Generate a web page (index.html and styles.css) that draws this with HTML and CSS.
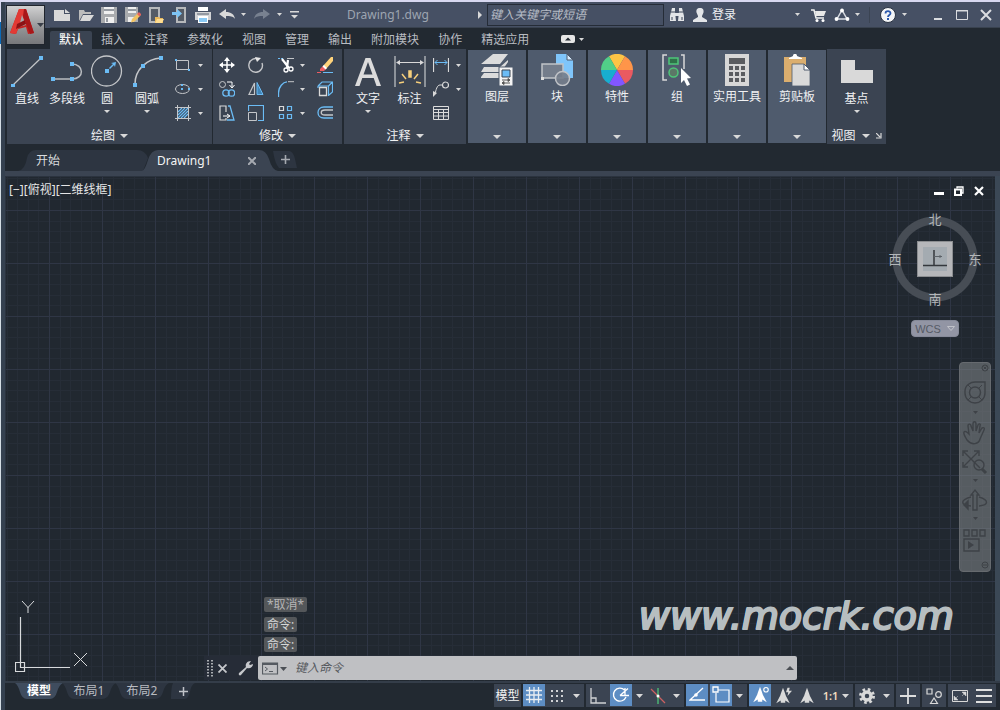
FILE: index.html
```html
<!DOCTYPE html>
<html lang="zh-CN">
<head>
<meta charset="utf-8">
<title>Drawing1.dwg</title>
<link rel="stylesheet" href="styles.css">
</head>
<body>
<svg class="defs" aria-hidden="true">
  <symbol id="caret" viewBox="0 0 6 4" preserveAspectRatio="none"><path d="M0 0h6L3 4z" fill="#d9d9d9"/></symbol>
  <symbol id="person" viewBox="0 0 24 24"><path d="M12 1l2.600 7 1.200 3.500L21 21.500l-6-3.500v3H9v-3l-6 3.500L8.200 11.500 9.400 8z" fill="currentColor"/></symbol>
</svg>
<div class="window">
  <header class="header">
    <div class="logo-cell">
      <button class="logo" aria-label="应用程序菜单">
        <svg width="38" height="38" viewBox="0 0 38 38">
          <path d="M3 27L12 3h7l8 24-6 1-2-7-8 2-2 5z" fill="#c4201f"/>
          <path d="M12 3h7l-8 20-2 5-6-1z" fill="#e23a35"/>
          <path d="M15 9l4 10-7 2z" fill="#a9a9aa"/>
          <path d="M10 18l8-4 1 4-10 5z" fill="#8d1114"/>
          <path d="M17 3h2l8 24-4 1-7-18z" fill="#a81719"/>
          <path d="M30 17h7l-3.500 4z" fill="#3a3f48"/>
        </svg>
      </button>
    </div>
    <div class="titlebar">
      <div class="quick">
        <button aria-label="新建"><svg width="16" height="16" viewBox="0 0 16 16"><path d="M0 3h10v4h6v7H0z" fill="#d9d9d9"/><path d="M11 2l5 4h-5z" fill="#d9d9d9"/></svg></button>
        <button aria-label="打开"><svg width="16" height="16" viewBox="0 0 16 16"><path d="M1 14V3h5l1 2h6v2H5z" fill="#bcbcbc"/><path d="M5 8h11l-4 6H2z" fill="#d9d9d9"/></svg></button>
        <button aria-label="保存"><svg width="16" height="16" viewBox="0 0 16 16"><path d="M0 0h16v16H0z" fill="#a9abae"/><path d="M3 0h10v7H3zM4 10h9v6H4z" fill="#f0f0f0"/><path d="M3 3h10M6 11v4" stroke="#3d4655"/></svg></button>
        <button aria-label="另存为"><svg width="16" height="16" viewBox="0 0 16 16"><path d="M0 0h13v15H0z" fill="#a9abae"/><path d="M3 0h8v6H3zM3 10h6v5H3z" fill="#eee"/><path d="M3 3h8" stroke="#3d4655"/><path d="M7 12l6-6 2.500 2.500-6 6L6 15.500z" fill="#f2c260"/><path d="M12 7l2-2 2.500 2.500-2 2z" fill="#e6605c"/></svg></button>
        <button aria-label="从移动设备打开"><svg width="16" height="16" viewBox="0 0 16 16"><path d="M2 1h9v14H2z" fill="#545b66" stroke="#b6b8bb" stroke-width="2"/><path d="M7 10h4l1 1h3v5H7z" fill="#e9b85a"/><path d="M9 12h7l-2 4H7z" fill="#ffdd91"/></svg></button>
        <button aria-label="保存到移动设备"><svg width="16" height="16" viewBox="0 0 16 16"><path d="M5 1h8v14H5z" fill="#545b66" stroke="#b6b8bb" stroke-width="2"/><path d="M0 5h5V2l5 4.500L5 11V8H0z" fill="#7cc3f5"/></svg></button>
        <button aria-label="打印"><svg width="16" height="16" viewBox="0 0 16 16"><path d="M3 0h10v4H3z" fill="#fff"/><path d="M0 5h16v8H0z" fill="#d2d3d5"/><path d="M2 7h12" stroke="#566070"/><path d="M3 9h10v7H3z" fill="#fff"/><path d="M4 11h8v4H4z" fill="#8bcaf5"/></svg></button>
        <button aria-label="放弃"><svg width="16" height="16" viewBox="0 0 16 16"><path d="M0 7l7-5v3c5 0 8 2 9 7-2-3-5-3-9-3v3z" fill="#d9d9d9"/></svg></button>
      </div>
      <button class="c1" aria-label="放弃列表"><svg width="5" height="3"><use href="#caret"/></svg></button>
      <button class="redo" aria-label="重做"><svg width="16" height="16" viewBox="0 0 16 16"><path d="M16 7L9 2v3C4 5 1 7 0 12c2-3 5-3 9-3v3z" fill="#788190"/></svg></button>
      <button class="c2" aria-label="重做列表"><svg width="5" height="3"><use href="#caret"/></svg></button>
      <button class="c3" aria-label="自定义快速访问工具栏"><svg width="9" height="8" viewBox="0 0 9 8"><path d="M0 0h9v1.500H0zM1 4h7L4.500 7.500z" fill="#d9d9d9"/></svg></button>
      <span class="doc-name">Drawing1.dwg</span>
      <div class="info">
        <svg width="4" height="8" viewBox="0 0 4 8"><path d="M0 0l4 4-4 4z" fill="#d9d9d9"/></svg>
        <input class="search" type="text" placeholder="键入关键字或短语" aria-label="搜索">
        <button aria-label="查找"><svg width="16" height="16" viewBox="0 0 16 16"><path d="M3 1h3v4l1 9H1V9zM10 1h3l2 8v5H9l1-9zM6 6h4v3H6z" fill="#e3e5e8"/><path d="M3 10v3M13 10v3M2 5h4M10 5h4" stroke="#3c4658"/></svg></button>
        <button class="login"><svg width="14" height="16" viewBox="0 0 14 16"><path d="M7 1c3 0 4 2 3.500 4.500L9 9v1l5 3v2H0v-2l5-3V9L3.500 5.500C3 3 4 1 7 1z" fill="#e3e5e8"/></svg><span>登录</span></button>
      </div>
      <div class="right-tools">
        <button aria-label="登录选项"><svg width="5" height="3"><use href="#caret"/></svg></button>
        <button class="cart" aria-label="购物车"><svg width="16" height="16" viewBox="0 0 16 16"><path d="M0 3h3l2 8h8" fill="none" stroke="#f0f0f0" stroke-width="1.500"/><path d="M4 4h11l-2 5H5z" fill="#e8e8e8"/><circle cx="6" cy="13.500" r="1.500" fill="#fff"/><circle cx="12" cy="13.500" r="1.500" fill="#fff"/></svg></button>
        <button class="a360" aria-label="保持连接"><svg width="16" height="16" viewBox="0 0 16 16"><path d="M8 3L3 12h10z" fill="none" stroke="#d8dbe2" stroke-width="1.500"/><g fill="#fff"><circle cx="8" cy="3.500" r="1.900"/><circle cx="2.500" cy="12" r="1.900"/><circle cx="13.500" cy="12" r="1.900"/></g></svg><svg width="5" height="3"><use href="#caret"/></svg></button>
        <button class="help" aria-label="帮助"><svg width="16" height="16" viewBox="0 0 16 16"><circle cx="8" cy="8" r="7.500" fill="#f4f5f7" stroke="#2b3343"/><path d="M5.500 6.500C5.500 3.500 10.500 3.500 10.500 6.300 10.500 8 8 8 8 10" fill="none" stroke="#2b58ad" stroke-width="1.800"/><path d="M7 11h2v2H7z" fill="#2b58ad"/></svg><svg width="5" height="3"><use href="#caret"/></svg></button>
        <div class="win-buttons">
          <button aria-label="最小化"><svg width="12" height="12" viewBox="0 0 12 12"><path d="M2 9h8v2H2z" fill="#dadce0"/></svg></button>
          <button aria-label="最大化"><svg width="12" height="12" viewBox="0 0 12 12"><path d="M.5 1.500h11v9H.5z" fill="none" stroke="#dadce0"/><path d="M0 1h12v1.500H0z" fill="#dadce0"/></svg></button>
          <button aria-label="关闭"><svg width="12" height="12" viewBox="0 0 12 12"><path d="M1 1l10 10M11 1L1 11" stroke="#dadce0" stroke-width="2"/></svg></button>
        </div>
      </div>
    </div>
    <nav class="tabs">
      <button class="tab active">默认</button><button class="tab">插入</button><button class="tab">注释</button><button class="tab">参数化</button><button class="tab">视图</button><button class="tab">管理</button><button class="tab">输出</button><button class="tab">附加模块</button><button class="tab">协作</button><button class="tab">精选应用</button>
      <button class="toggle" aria-label="最小化功能区"><svg width="14" height="8" viewBox="0 0 14 8"><rect width="14" height="8" rx="2" fill="#e6e6e6"/><path d="M4 5.500h6L7 2.500z" fill="#222931"/></svg><svg width="5" height="3"><use href="#caret"/></svg></button>
    </nav>
  </header>

  <section class="ribbon">
    <div class="panel draw">
      <div class="panel-body">
        <button class="big"><svg width="32" height="32" viewBox="0 0 32 32"><path d="M2 30L30 3" stroke="#c4c6c9" stroke-width="1.200"/><path d="M0 29h4v3H0zM28 1h4v4h-4z" fill="#6bbcf5"/></svg><span>直线</span></button>
        <button class="big"><svg width="32" height="32" viewBox="0 0 32 32"><path d="M1 24h20c13 0 12-15 0-15" fill="none" stroke="#b9bcc0" stroke-width="1.500"/><path d="M0 22h4v4H0zM19 22h4v4h-4zM19 7h4v4h-4z" fill="#6bbcf5"/></svg><span>多段线</span></button>
        <button class="big"><svg width="32" height="32" viewBox="0 0 32 32"><circle cx="15.500" cy="16" r="15" fill="none" stroke="#c4c6c9" stroke-width="1.300"/><path d="M14 14h4v4h-4zM18 13l4-4-2-1 5-1-1 5-1-2-4 4z" fill="#6bbcf5"/></svg><span>圆</span><svg width="6" height="3"><use href="#caret"/></svg></button>
        <button class="big"><svg width="32" height="32" viewBox="0 0 32 32"><path d="M4 29C4 15 15 4 30 3" fill="none" stroke="#c4c6c9" stroke-width="1.500"/><path d="M2 28h4v4H2zM10 9h4v4h-4zM28 1h4v4h-4z" fill="#6bbcf5"/></svg><span>圆弧</span><svg width="6" height="3"><use href="#caret"/></svg></button>
        <div class="small-col">
          <button class="small" aria-label="矩形"><svg width="16" height="16" viewBox="0 0 16 16"><path d="M1.500 3.500h12v9h-12z" fill="none" stroke="#c4c6c9"/><path d="M0 2h2v2H0zM13 12h2v2h-2z" fill="#6bbcf5"/></svg><svg width="5" height="3"><use href="#caret"/></svg></button>
          <button class="small" aria-label="椭圆"><svg width="16" height="16" viewBox="0 0 16 16"><ellipse cx="7.500" cy="8" rx="7" ry="4.500" fill="none" stroke="#c4c6c9"/><path d="M6 7h2v2H6zM6 3h2v2H6zM13 7h2v2h-2z" fill="#6bbcf5"/></svg><svg width="5" height="3"><use href="#caret"/></svg></button>
          <button class="small" aria-label="图案填充"><svg width="16" height="16" viewBox="0 0 16 16"><path d="M3 7l4-4M3 10l7-7M3 13L13 3M6 13l7-7M9 13l4-4" stroke="#6bbcf5" stroke-width="1.200"/><path d="M2.500 0v16M13.500 0v16M0 2.500h16M0 13.500h16" stroke="#c4c6c9"/></svg><svg width="5" height="3"><use href="#caret"/></svg></button>
        </div>
      </div>
      <button class="panel-title">绘图<svg width="8" height="4"><use href="#caret"/></svg></button>
    </div>

    <div class="panel modify">
      <div class="tool-grid">
        <button aria-label="移动"><svg width="16" height="16" viewBox="0 0 16 16"><path d="M8 1v14M1 8h14" stroke="#fff" stroke-width="1.500"/><path d="M5 4l3-4 3 4zM5 12l3 4 3-4zM4 5L0 8l4 3zM12 5l4 3-4 3z" fill="#fff"/></svg></button>
        <button aria-label="旋转"><svg width="16" height="16" viewBox="0 0 16 16"><path d="M11 2.500A6.800 6.800 0 1 0 14 6" fill="none" stroke="#c4c6c9" stroke-width="1.400"/><path d="M7 0l6 1-4 4z" fill="#e6e6e6"/></svg></button>
        <button class="drop" aria-label="修剪"><svg width="16" height="16" viewBox="0 0 16 16"><path d="M0 1.500h6" stroke="#6bbcf5" stroke-dasharray="2 1"/><path d="M9 1.500h7" stroke="#c4c6c9"/><path d="M4 2l7 9M10 3L9 11" stroke="#fff" stroke-width="2.200"/><circle cx="8" cy="13" r="2" fill="none" stroke="#fff" stroke-width="1.300"/><circle cx="13" cy="12" r="2" fill="none" stroke="#fff" stroke-width="1.300"/></svg><svg width="5" height="3"><use href="#caret"/></svg></button>
        <button aria-label="删除"><svg width="16" height="16" viewBox="0 0 16 16"><path d="M6 9L14 0h2v4l-7 8z" fill="#ffd37a"/><path d="M6 9l3 3-2 2H3v-2z" fill="#ed5c63"/><path d="M5.500 9.500L7 8l3 3-1.500 1.500z" fill="#fff"/><path d="M0 15.500h4" stroke="#ed5c63"/><path d="M6 15.500h10" stroke="#6bbcf5"/></svg></button>

        <button aria-label="复制"><svg width="16" height="16" viewBox="0 0 16 16"><circle cx="3.500" cy="3.500" r="3" fill="none" stroke="#c4c6c9"/><path d="M8 1h5v5M10.500 4L13 7l2.500-3" fill="none" stroke="#fff"/><circle cx="7" cy="12" r="3.200" fill="none" stroke="#6bbcf5" stroke-width="1.300"/><circle cx="12.500" cy="12" r="3.200" fill="none" stroke="#6bbcf5" stroke-width="1.300"/></svg></button>
        <button aria-label="镜像"><svg width="16" height="16" viewBox="0 0 16 16"><path d="M6.500 2v11.500H1z" fill="none" stroke="#c4c6c9" stroke-width="1.200"/><path d="M9 1.500v12h6z" fill="#4286b8" stroke="#6bbcf5"/></svg></button>
        <button class="drop" aria-label="圆角"><svg width="16" height="16" viewBox="0 0 16 16"><path d="M.5 16v-4C.5 6 5 1 9 .8" fill="none" stroke="#6bbcf5" stroke-width="1.300"/><path d="M10 .7h6" stroke="#c4c6c9"/></svg><svg width="5" height="3"><use href="#caret"/></svg></button>
        <button aria-label="分解"><svg width="16" height="16" viewBox="0 0 16 16"><path d="M1 5l4-4h10.500v10L12 14M1 5h10.500v10M11.500 5l4-4M1 5v2" fill="none" stroke="#6bbcf5" stroke-width="1.200"/><path d="M2.500 6.500h7v8h-7z" fill="none" stroke="#d9d9d9" stroke-width="1.300"/></svg></button>

        <button aria-label="拉伸"><svg width="16" height="16" viewBox="0 0 16 16"><path d="M7 7V1H1v14h6v-2" fill="none" stroke="#d9d9d9" stroke-width="1.200"/><path d="M9 1h2l4 14H8" fill="none" stroke="#6bbcf5" stroke-width="1.300"/><path d="M4 11h6M8 9l3 2-3 2" stroke="#fff" fill="none"/></svg></button>
        <button aria-label="缩放"><svg width="16" height="16" viewBox="0 0 16 16"><path d="M.5 6V.5h15v15H10" fill="none" stroke="#6bbcf5" stroke-width="1.200"/><path d="M.5 7.500h8v8h-8z" fill="none" stroke="#c4c6c9"/></svg></button>
        <button class="drop" aria-label="阵列"><svg width="16" height="16" viewBox="0 0 16 16"><path d="M1.500 1.500h4v4h-4z" fill="none" stroke="#d9d9d9" stroke-width="1.200"/><path d="M9.500 1.500h4v4h-4zM1.500 9.500h4v4h-4zM9.500 9.500h4v4h-4z" fill="none" stroke="#6bbcf5" stroke-width="1.200"/></svg><svg width="5" height="3"><use href="#caret"/></svg></button>
        <button aria-label="偏移"><svg width="16" height="16" viewBox="0 0 16 16"><path d="M16 2H7C-1 2-1 13 7 13h9" fill="none" stroke="#6bbcf5" stroke-width="1.300"/><path d="M16 5H8C3 5 3 10 8 10h8" fill="none" stroke="#c4c6c9" stroke-width="1.300"/></svg></button>
      </div>
      <button class="panel-title">修改<svg width="8" height="4"><use href="#caret"/></svg></button>
    </div>

    <div class="panel annotate">
      <div class="panel-body">
        <button class="big"><svg width="32" height="32" viewBox="0 0 32 32"><path d="M3 31L13.500 3h5L29 31h-4.500l-2.800-8H10.300l-2.800 8zM11.500 19.500h9L16 7z" fill="#dcdcdc" fill-rule="evenodd"/></svg><span>文字</span><svg width="6" height="3"><use href="#caret"/></svg></button>
        <button class="big"><svg width="32" height="32" viewBox="0 0 32 32"><path d="M1 1v31M31 1v31" stroke="#a9adb3" stroke-width="1.500"/><path d="M3 7.500h26" stroke="#d9d9d9"/><path d="M2 7.500L6 5v5zM30 7.500L26 5v5z" fill="#d9d9d9"/><path d="M15 16h2v6h-2zM8 19l4 5M24 19l-4 5M5 28l5-1M22 27l5 1" stroke="#f6cf7c" stroke-width="1.500" fill="#f6cf7c"/></svg><span>标注</span></button>
        <div class="small-col">
          <button class="small" aria-label="线性"><svg width="16" height="16" viewBox="0 0 16 16"><path d="M.5 1v14M15.500 1v14" stroke="#d9d9d9" stroke-width="1.200"/><path d="M2 5.500h12M4.500 3L2 5.500 4.500 8M11.500 3L14 5.500 11.500 8" stroke="#6bbcf5" fill="none"/></svg><svg width="5" height="3"><use href="#caret"/></svg></button>
          <button class="small" aria-label="引线"><svg width="16" height="16" viewBox="0 0 16 16"><circle cx="12.500" cy="4" r="3" fill="none" stroke="#d9d9d9" stroke-width="1.200"/><path d="M9 4H7C4 4 3 9 2 13" fill="none" stroke="#d9d9d9"/><path d="M0 10l4 2-4 4z" fill="#d9d9d9"/></svg><svg width="5" height="3"><use href="#caret"/></svg></button>
          <button class="small" aria-label="表格"><svg width="16" height="16" viewBox="0 0 16 16"><path d="M.5 1.500h15v13H.5zM.5 4.500h15M.5 7.500h15M.5 11h15M5.500 5v9M10.500 5v9" fill="none" stroke="#dcdcdc"/></svg></button>
        </div>
      </div>
      <button class="panel-title">注释<svg width="8" height="4"><use href="#caret"/></svg></button>
    </div>

    <button class="folded"><svg width="32" height="32" viewBox="0 0 32 32"><path d="M12 0h15l-8 10H0zM3 13h16l8-7v2l-7 10H0zM3 19h15v5H0v-1z" fill="#dcdcdc"/><path d="M0 11.500h19l8-7M0 18.500h19" stroke="#4f5b6d" fill="none"/><path d="M18 13h14v19H18z" fill="#f4f4f4" stroke="#4f5b6d"/><path d="M21 16h8v7h-8z" fill="#6bbcf5" stroke="#3b4452"/><path d="M21 26h7M22 29h7M21 29l2-1.500v3zM29 26l-2-1.500v3z" stroke="#555" fill="#555"/></svg><span>图层</span><svg width="8" height="4"><use href="#caret"/></svg></button>
    <button class="folded"><svg width="32" height="32" viewBox="0 0 32 32"><path d="M15 0h11l6 6v18H15z" fill="#7fc5fa"/><path d="M26 0l6 6h-6z" fill="#d7edff" stroke="#4f5b6d"/><path d="M1 10h21v14H1z" fill="#747d8b" stroke="#c0c3c7" stroke-width="1.500"/><circle cx="21.500" cy="24.500" r="7" fill="#747d8b" fill-opacity=".9" stroke="#c0c3c7" stroke-width="1.500"/><path d="M0 23h3v3H0z" fill="#ddd"/></svg><span>块</span><svg width="8" height="4"><use href="#caret"/></svg></button>
    <button class="folded"><svg width="32" height="32" viewBox="0 0 32 32"><path d="M16 16L8 2.140A16 16 0 0 1 24 2.140z" fill="#fec445"/><path d="M16 16L24 2.140A16 16 0 0 1 32 16z" fill="#ff9549"/><path d="M16 16H32A16 16 0 0 1 24 29.860z" fill="#ea5a61"/><path d="M16 16L24 29.860A16 16 0 0 1 8 29.860z" fill="#8256ff"/><path d="M16 16L8 29.860A16 16 0 0 1 0 16z" fill="#18aed0"/><path d="M16 16H0A16 16 0 0 1 8 2.140z" fill="#51cf88"/></svg><span>特性</span><svg width="8" height="4"><use href="#caret"/></svg></button>
    <button class="folded"><svg width="32" height="32" viewBox="0 0 32 32"><path d="M6 1H2v25h4M20 1h3v14" fill="none" stroke="#d9d9d9" stroke-width="1.500"/><path d="M8 4h9v6H8z" fill="#2f7149" stroke="#4fc579" stroke-width="1.500"/><circle cx="12.500" cy="18.500" r="4.500" fill="#5c7767" stroke="#4fc579" stroke-width="1.500"/><path d="M20 14l10 10-4 .500 3 6-3 1.500-3-6-3 3z" fill="#fff"/></svg><span>组</span><svg width="8" height="4"><use href="#caret"/></svg></button>
    <button class="folded"><svg width="32" height="32" viewBox="0 0 32 32"><path d="M4 0h24v32H4z" fill="#d7d7d7"/><path d="M8 4h16v6H8zM8 12h4v4H8zM14 12h4v4h-4zM20 12h4v4h-4zM8 18h4v4H8zM14 18h4v4h-4zM20 18h4v4h-4zM8 24h4v4H8zM14 24h4v4h-4zM20 24h4v4h-4z" fill="#5a5c60"/></svg><span>实用工具</span><svg width="8" height="4"><use href="#caret"/></svg></button>
    <button class="folded"><svg width="32" height="32" viewBox="0 0 32 32"><path d="M3 3h22v25H3z" fill="#dbae6e"/><path d="M8 4l4-2c0-3 4-3 4 0l5 2v1H8z" fill="#fff"/><path d="M11 10h12l6 6v16H11z" fill="#d9d9d9" stroke="#4f5b6d" stroke-width=".8"/><path d="M23 10l6 6h-6z" fill="#fff" stroke="#4f5b6d"/></svg><span>剪贴板</span><svg width="8" height="4"><use href="#caret"/></svg></button>

    <div class="panel view">
      <div class="panel-body">
        <button class="big"><svg width="32" height="32" viewBox="0 0 32 32"><path d="M0 5h14v10h18v13H0z" fill="#d9d9d9"/></svg><span>基点</span><svg width="6" height="3"><use href="#caret"/></svg></button>
      </div>
      <button class="panel-title">视图<svg width="8" height="4"><use href="#caret"/></svg><svg width="6" height="6" viewBox="0 0 6 6"><path d="M0 0l4 4M5 0v5H0" fill="none" stroke="#d9d9d9" stroke-width="1.200"/></svg></button>
    </div>
  </section>

  <nav class="file-tabs">
    <button class="file-tab start">开始</button>
    <div class="file-tab current"><span>Drawing1</span><button aria-label="关闭图形"><svg width="8" height="8" viewBox="0 0 8 8"><path d="M0 0l8 8M8 0L0 8" stroke="#a5a9b0" stroke-width="2"/></svg></button></div>
    <button class="file-tab add" aria-label="新图形"><svg width="9" height="9" viewBox="0 0 9 9"><path d="M4.500 0v9M0 4.500h9" stroke="#a5a9b0" stroke-width="1.600"/></svg></button>
  </nav>

  <main class="canvas">
    <div class="view-label">[−][俯视][二维线框]</div>
    <div class="view-buttons">
      <button aria-label="最小化视口"><svg width="10" height="10" viewBox="0 0 10 10"><path d="M0 6h10v3H0z" fill="#fff"/></svg></button>
      <button aria-label="还原视口"><svg width="10" height="10" viewBox="0 0 10 10"><path d="M3 2.500V1h6v6H7.500" fill="none" stroke="#fff" stroke-width="1.300"/><path d="M1 3.500h6V9H1z" fill="none" stroke="#fff" stroke-width="2"/></svg></button>
      <button aria-label="关闭视口"><svg width="10" height="10" viewBox="0 0 10 10"><path d="M1 1l8 8M9 1L1 9" stroke="#fff" stroke-width="2.200"/></svg></button>
    </div>
    <div class="cube">
      <button class="north">北</button><button class="west">西</button><button class="top" aria-label="上"><svg width="34" height="34" viewBox="1 1 34 34"><path d="M6 6h24v24H6z" fill="#a4abb1"/><path d="M17 9v16M6 24.500h24" stroke="#34383d" stroke-width="1.500" fill="none"/><path d="M17 15.500h8M23 14v3" stroke="#5c6268"/></svg></button><button class="east">东</button><button class="south">南</button>
    </div>
    <button class="wcs">WCS<svg width="8" height="5" viewBox="0 0 8 5"><path d="M.5.500h7L4 4.500z" fill="none" stroke="#c0c2c9"/></svg></button>
    <div class="navbar">
      <svg width="30" height="208" viewBox="1 0 30 208" fill="none" stroke="#3e4247" stroke-width="1.400">
        <circle cx="26" cy="5" r="3" stroke-width="1"/><path d="M24.500 3.500l3 3M27.500 3.500l-3 3" stroke-width="1"/>
        <path d="M6 30V28C6 22 12 19 16 19h10v11c0 6-5 10-10 10S6 36 6 30z"/><circle cx="16" cy="29.500" r="5.500"/><path d="M9 22l3 3M23 22l-3 3M9 37l3-3M23 37l-3-3" stroke-width="1"/>
        <path d="M14 48h5l-2.500 3z" fill="#3e4247" stroke="none"/>
        <path d="M8 77c-2-4-4-6-3-8s4 1 5 2l-1-8c0-3 3-2 3 0l2 5v-7c0-3 3-3 3 0v7l2-6c1-2 3-1 2 1l-1 7 3-5c2-1 3 0 2 2l-4 9c-1 5-8 7-13 1z"/>
        <path d="M5 89l16 16M5 103l14-14M4 93v-5h5M15 88h5v5M4 99v5h5"/><circle cx="20" cy="102" r="5"/><path d="M23 106l4 4" stroke-width="3"/>
        <path d="M14 116h5l-2.500 3z" fill="#3e4247" stroke="none"/>
        <path d="M14 147v-15h-2l4-5 4 5h-2v15z"/><path d="M12 134c-11 3-11 8 0 9M20 134c10 3 10 8 0 9"/><path d="M9 138v8l-4-4z" fill="#3e4247"/>
        <path d="M14 154h5l-2.500 3z" fill="#3e4247" stroke="none"/>
        <path d="M5 167h5v6H5zM13 167h5v6h-5zM21 167h5v6h-5zM5 176h15v12H5z"/><path d="M9 178l6 4-6 4z" fill="#3e4247" stroke="none"/>
        <circle cx="26" cy="202" r="3" stroke-width="1"/><path d="M24 202h4" stroke-width="1"/>
      </svg>
    </div>
    <svg class="ucs" width="76" height="76" viewBox="0 0 76 76" fill="none" stroke="#d8dadc">
      <path d="M5.500 20v50.500H55M.5 65.500h9v9h-9z" stroke-width="1.200"/><path d="M7 4l6 6.500L19 4M13 10v6M59 56l13 13M72 56L59 69"/>
    </svg>
    <div class="watermark">www.mocrk.com</div>
    <div class="command">
      <div class="history"><span>*取消*</span><span>命令:</span><span>命令:</span></div>
      <div class="command-line">
        <div class="handle"><svg width="6" height="17" viewBox="0 0 6 17"><path d="M1 0v17M5 0v17" stroke="#a8abb0" stroke-width="2" stroke-dasharray="1.500 1.500"/></svg>
          <button aria-label="关闭命令行"><svg width="9" height="9" viewBox="0 0 9 9"><path d="M.5.500l8 8M8.500.500l-8 8" stroke="#c5c7cb" stroke-width="1.800"/></svg></button>
          <button aria-label="自定义"><svg width="15" height="15" viewBox="0 0 15 15"><path d="M1 12l7-6c-1-3 1-6 5-6l-2 3 1 1 3-1c0 3-3 5-6 4l-6 7c-1 1-3 0-2-2z" fill="#c5c7cb"/></svg></button></div>
        <label class="prompt"><svg width="25" height="13" viewBox="0 0 25 13"><path d="M.5 1h15v11H.5z" fill="none" stroke="#555a61" stroke-width="1.200"/><path d="M0 1h16v2H0z" fill="#555a61"/><path d="M3 5l2.500 2L3 9M7 9.500h4" fill="none" stroke="#555a61"/><path d="M18 5h7l-3.500 4z" fill="#4b4f55"/></svg><input type="text" placeholder="键入命令" aria-label="命令"><svg width="8" height="4" viewBox="0 0 8 4"><path d="M0 4h8L4 0z" fill="#4b4f55"/></svg></label>
      </div>
    </div>
  </main>

  <footer class="footer">
    <div class="layouts">
      <button class="layout active">模型</button><button class="layout">布局1</button><button class="layout">布局2</button><button class="layout plus" aria-label="新建布局"><svg width="9" height="9" viewBox="0 0 9 9"><path d="M4.500 0v9M0 4.500h9" stroke="#c0c3c8" stroke-width="1.500"/></svg></button>
    </div>
    <div class="status">
      <div class="group"><button class="text">模型</button></div>
      <div class="group"><button class="on" aria-label="栅格"><svg width="16" height="16" viewBox="0 0 16 16"><path d="M3.500 0v16M8 0v16M12.500 0v16M0 3.500h16M0 8h16M0 12.500h16" stroke="#e8edf2" stroke-width="1.300"/></svg></button><button aria-label="捕捉"><svg width="14" height="14" viewBox="0 0 14 14"><path d="M1 2h13M1 7h13M1 12h13" stroke="#cfd1d4" stroke-width="2" stroke-dasharray="2 3"/></svg></button><button class="drop-arrow" aria-label="捕捉选项"><svg width="7" height="4"><use href="#caret"/></svg></button></div>
      <div class="group"><button aria-label="正交"><svg width="16" height="16" viewBox="0 0 16 16"><path d="M1 0v15h15M1 10h5v5" fill="none" stroke="#cfd1d4" stroke-width="1.300"/></svg></button><button class="on" aria-label="极轴追踪"><svg width="18" height="18" viewBox="0 0 18 18"><path d="M12.500 4A6.500 6.500 0 1 0 14 11M8 9.500h9M8 9.500l8-7M13 2v8" fill="none" stroke="#fff" stroke-width="1.300"/></svg></button><button class="drop-arrow" aria-label="极轴选项"><svg width="7" height="4"><use href="#caret"/></svg></button><button aria-label="等轴测草图"><svg width="16" height="16" viewBox="0 0 16 16"><path d="M1 1l14 14" stroke="#cc6161" stroke-width="1.300"/><path d="M8 0v16" stroke="#4fc579" stroke-width="1.300"/><circle cx="8" cy="8" r="1.500" fill="#fff"/></svg></button><button class="drop-arrow" aria-label="等轴测选项"><svg width="7" height="4"><use href="#caret"/></svg></button></div>
      <div class="group"><button class="on" aria-label="对象捕捉追踪"><svg width="16" height="16" viewBox="0 0 16 16"><path d="M14 1L1 13h15" fill="none" stroke="#fff" stroke-width="1.300"/><circle cx="7" cy="8" r="1.800" fill="#fff"/></svg></button><button class="on" aria-label="对象捕捉"><svg width="18" height="18" viewBox="0 0 18 18"><path d="M6 4h11v12H4V7" fill="none" stroke="#fff" stroke-width="1.200"/><path d="M1 1h5v5H1z" fill="none" stroke="#fff" stroke-width="1.300"/></svg></button><button class="drop-arrow" aria-label="捕捉设置"><svg width="7" height="4"><use href="#caret"/></svg></button></div>
      <div class="group"><button class="on" aria-label="注释可见性"><svg width="18" height="18" viewBox="0 0 24 24"><use href="#person"/><circle cx="20" cy="5" r="3" fill="none" stroke="#fff" stroke-width="1.500"/></svg></button><button aria-label="自动缩放"><svg width="18" height="18" viewBox="0 0 24 24"><use href="#person"/><path d="M18 1l-2 6h3l-1 5 6-7h-4l1-4z" fill="#d9d9d9"/></svg></button><button aria-label="注释比例"><svg width="18" height="18" viewBox="0 0 24 24"><use href="#person"/></svg></button><button class="scale">1:1<svg width="7" height="4"><use href="#caret"/></svg></button></div>
      <div class="group"><button aria-label="切换工作空间"><svg width="16" height="16" viewBox="0 0 16 16"><circle cx="8" cy="8" r="6.500" fill="none" stroke="#d9d9d9" stroke-width="3" stroke-dasharray="2.550"/><circle cx="8" cy="8" r="4" fill="none" stroke="#d9d9d9" stroke-width="3.500"/></svg></button><button class="drop-arrow" aria-label="工作空间选项"><svg width="7" height="4"><use href="#caret"/></svg></button></div>
      <div class="group"><button aria-label="注释监视器"><svg width="16" height="16" viewBox="0 0 16 16"><path d="M8 0v16M0 8h16" stroke="#dedede" stroke-width="1.800"/></svg></button></div>
      <div class="group"><button aria-label="隔离对象"><svg width="16" height="16" viewBox="0 0 16 16"><path d="M1 1h5v5H1zM8 10l3.500 5.500h-7z" fill="none" stroke="#d9d9d9" stroke-width="1.200"/><circle cx="12.500" cy="6.500" r="2.800" fill="none" stroke="#d9d9d9" stroke-width="1.200"/></svg></button></div>
      <div class="group"><button aria-label="全屏显示"><svg width="16" height="12" viewBox="0 0 16 12"><path d="M.5.500h15v11H.5z" fill="none" stroke="#d9d9d9"/><path d="M10 2h4v4zM6 10H2V6zM3 9l3-3M10 6l3-3" fill="#d9d9d9" stroke="#d9d9d9" stroke-width=".5"/></svg></button><button aria-label="自定义"><svg width="16" height="14" viewBox="0 0 16 14"><path d="M0 1h16M0 7h16M0 13h16" stroke="#e0e0e0" stroke-width="1.800"/></svg></button></div>
    </div>
  </footer>
</div>
</body>
</html>
```
FILE: styles.css
```css
* { box-sizing: border-box; }
body {
  margin: 0;
  padding: 2px 0 0 1px;
  background: linear-gradient(#d8d8f0 22px, #0a6ab8 22px, #0a6ab8 44px, #d4dde4 44px);
  font: 12px/16px "Noto Sans", "Noto Sans CJK SC", sans-serif;
  color: #d9dbde;
}
button, input { font: inherit; color: inherit; }
button { margin: 0; padding: 0; border: 0; background: none; display: flex; align-items: center; justify-content: center; flex: none; }
svg { display: block; flex: none; }
.defs { position: absolute; width: 0; height: 0; }

.window {
  display: flex;
  flex-direction: column;
  min-height: calc(100vh - 2px);
  background: #222931;
  border-left: 4px solid #354150;
}

/* title bar and ribbon tabs */
.header { display: grid; grid-template: 26px 21px / 45px 1fr; }
.logo-cell { grid-row: 1 / 3; padding: 3px 0 0 1px; background: linear-gradient(#465064 26px, #222931 26px); }
.logo { width: 39px; height: 40px; border: 1px solid #20252d; background: linear-gradient(#d0d0d1, #929395 60%, #77787b); }
.titlebar { display: flex; align-items: center; background: #465064; border-bottom: 1px solid #39424f; }
.quick { display: flex; justify-content: space-between; width: 181px; margin-left: 4px; }
.c1 { margin-left: 6px; }
.redo { margin-left: 8px; }
.c2 { margin-left: 7px; }
.c3 { margin-left: 8px; }
.doc-name { margin-left: 48px; color: #9da5b1; font-size: 12px; width: 131px; }
.info { display: flex; align-items: center; }
.search {
  width: 177px; height: 22px; margin: 0 5px 0 5px; padding: 0 2px;
  border: 1px solid #252c37; background: #465064; font-style: italic;
}
.search::placeholder, .prompt input::placeholder { color: #b6bcc6; opacity: 1; font-style: italic; }
.login { gap: 5px; margin-left: 8px; color: #f0f1f3; }
.right-tools { display: flex; align-items: center; margin-left: auto; }
.cart { margin-left: 11px; }
.a360, .help { gap: 5px; margin-left: 7px; }
.help { margin-left: 9px; padding-left: 10px; border-left: 1px solid #3b4453; gap: 6px; }
.win-buttons { display: flex; gap: 12px; margin: 0 8px 0 25px; }
.tabs { display: flex; align-items: flex-end; }
.tab { height: 18px; padding: 0 10px 0 9px; color: #b9bcc1; }
.tab.active { padding: 0 9px 0 9px; background: #3b4452; color: #f4f4f4; font-weight: 500; border-radius: 2px 2px 0 0; }
.toggle { height: 18px; margin-left: 22px; gap: 4px; padding-bottom: 2px; }

/* ribbon */
.ribbon { display: flex; gap: 2px; height: 95px; padding-left: 2px; }
.panel { display: flex; flex-direction: column; background: #3b4452; }
.panel-body { display: flex; flex: 1; }
.draw { width: 205px; margin-right: -1px; }
.modify { width: 129px; }
.annotate { width: 122px; }
.view { width: 59px; margin-left: -1px; }
.big { flex-direction: column; justify-content: flex-start; width: 40px; padding-top: 6px; white-space: nowrap; color: #f0f1f3; }
.big span { line-height: 20px; margin-top: 2px; }
.big svg:last-child:not(:first-child) { margin-top: 1px; }
.annotate .big:first-child { width: 48px; }
.annotate .big { width: 35px; }
.view .big { width: 100%; }
.small-col { display: grid; grid-template-rows: repeat(3, 24px); align-content: start; padding: 4px 0 0 8px; }
.small { justify-content: flex-start; gap: 7px; }
.annotate .small-col { padding-left: 6px; }
.tool-grid { display: grid; grid-template: repeat(3, 24px) / 28px 30px 40px 28px; padding-top: 4px; flex: 1; align-content: start; }
.drop { gap: 6px; }
.panel-title { height: 17px; gap: 5px; color: #f0f1f3; }
.view .panel-title { gap: 6px; }
.folded {
  flex-direction: column; justify-content: flex-start; width: 58px; height: 93px; margin-top: 1px;
  padding: 4px 0; background: #4f5b6d; color: #f0f1f3; white-space: nowrap;
}
.folded span { line-height: 20px; margin-top: 1px; }
.folded svg:last-child { margin-top: auto; }

/* drawing tabs */
.file-tabs { display: flex; align-items: flex-end; height: 32px; padding-left: 13px; border-bottom: 5px solid #3b4452; }
.file-tab { height: 21px; }
.start { width: 132px; justify-content: flex-start; padding-left: 18px; background: #2d3541; clip-path: path("M0 21Q7 20 9 8Q11 0 18 0H119Q127 0 130 8L125 21Z"); }
.current { display: flex; align-items: center; width: 136px; margin-left: -8px; padding-left: 15px; background: #3b4452; color: #f4f4f4; clip-path: path("M0 21Q3 20 6 10Q9 0 16 0H117Q124 0 127 9Q130 20 136 21Z"); }
.current button { margin-left: auto; margin-right: 22px; }
.add { width: 24px; height: 17px; margin: 0 0 3px -5px; background: #2d3541; clip-path: path("M0 0H16Q20 0 22 8L24 17H6Q2 13 0 0Z"); }

/* drawing area */
.canvas {
  position: relative; flex: 1; min-height: 480px;
  margin-right: 5px; border-left: 1px solid #2b333f; border-top: 1px solid #2b333f;
  background-color: #212830;
  background-image:
    linear-gradient(90deg, #2f3645 1px, transparent 1px),
    linear-gradient(#2f3645 1px, transparent 1px),
    linear-gradient(90deg, transparent 11px, #262d37 11px, #262d37 12px, transparent 12px, transparent 21px, #262d37 21px, #262d37 22px, transparent 22px, transparent 32px, #262d37 32px, #262d37 33px, transparent 33px, transparent 42px, #262d37 42px, #262d37 43px, transparent 43px),
    linear-gradient(transparent 11px, #262d37 11px, #262d37 12px, transparent 12px, transparent 21px, #262d37 21px, #262d37 22px, transparent 22px, transparent 32px, #262d37 32px, #262d37 33px, transparent 33px, transparent 42px, #262d37 42px, #262d37 43px, transparent 43px);
  background-size: 53px 53px;
  background-position: 43px 33px;
  box-shadow: 5px 0 #3b4856;
}
.view-label { padding: 5px 3px; color: #e4e5e6; }
.view-buttons { position: absolute; top: 9px; right: 11px; display: flex; gap: 10px; }
.cube {
  position: absolute; top: 34px; right: 12px; width: 96px; height: 96px;
  display: grid; grid-template: 16px 64px 16px / 16px 64px 16px; place-items: center;
  background: radial-gradient(circle, transparent 34px, #474d55 35px, #474d55 42px, transparent 43px);
  color: #b3b6b9; font-size: 13px;
}
.north, .south { grid-column: 2; }
.north { grid-row: 1; }
.west, .top, .east { grid-row: 2; }
.south { grid-row: 3; }
.top { background: #b6b7ba; border: 1px solid #8c8e91; }
.wcs {
  position: absolute; top: 143px; right: 36px; width: 48px; height: 17px; gap: 6px;
  border: 1px solid #868a99; border-radius: 4px; background: #9295a4; color: #565b66; font: 11px/14px "Liberation Sans", sans-serif;
}
.navbar { position: absolute; top: 185px; right: 4px; border: 1px solid #666a6f; border-radius: 4px; background: rgba(140, 143, 146, .5); width: 32px; height: 210px; overflow: hidden; }
.ucs { position: absolute; left: 9px; bottom: 8px; }
.watermark {
  position: absolute; right: 41px; bottom: 41px; color: #b7bec0;
  font: italic 38px/48px "DejaVu Sans", sans-serif;
  -webkit-text-stroke: 2px #b7bec0;
  text-shadow: -1px 0 #dfe5e5;
}
.command { position: absolute; left: 198px; right: 198px; bottom: 1px; }
.history { display: flex; flex-direction: column; align-items: flex-start; gap: 5px; margin: 0 0 4px 60px; }
.history span { padding: 0 3px; line-height: 15px; background: #54575a; color: #d6d7d8; border-radius: 2px; }
.history span:first-child { color: #b4b5b6; }
.command-line { display: flex; height: 24px; }
.handle { display: flex; align-items: center; width: 54px; padding-left: 3px; gap: 5px; background: #262c37; }
.handle button:last-child { margin-left: 6px; }
.prompt { display: flex; flex: 1; align-items: center; padding: 0 3px 0 4px; background: #bfc0c3; border-radius: 2px; }
.prompt input { flex: 1; min-width: 0; border: 0; padding: 0 8px; background: none; }
.prompt input::placeholder { color: #55585d; }

/* layout tabs and status bar */
.footer { display: flex; height: 29px; border-top: 2px solid #343d49; }
.layouts { display: flex; align-items: flex-start; padding-left: 10px; }
.layout { height: 16px; width: 54px; margin-right: -1px; color: #b9bcc1; background: #2d3541; clip-path: path("M0 0H54Q50 2 48 9Q46 16 40 16H12Q7 16 5 9Q3 2 0 0Z"); }
.layout.active { width: 48px; color: #fff; font-weight: bold; background: #3f4c5e; clip-path: path("M0 0H48Q44 2 42 9Q40 16 35 16H12Q7 16 5 9Q3 2 0 0Z"); }
.layout.plus { width: 24px; clip-path: path("M2 0H24Q20 2 19 9Q17 16 14 16H0Q0 4 2 0Z"); margin-left: 3px; }
.status { display: flex; gap: 2px; margin: 1px 4px 0 auto; }
.group { display: flex; align-items: flex-start; height: 23px; background: #3b4452; color: #d9d9d9; }
.group button { width: 24px; height: 23px; }
.group .on { width: 22px; height: 22px; background: #5d8dc3; color: #fff; }
.group .on + .on { margin-left: 2px; }
.group .text { width: 27px; color: #f4f4f4; }
.group .drop-arrow { width: 15px; }
.group .drop-arrow + button { width: 22px; }
.group .scale { width: 34px; gap: 4px; color: #f0dcc0; font-size: 11px; font-weight: 600; }
```
